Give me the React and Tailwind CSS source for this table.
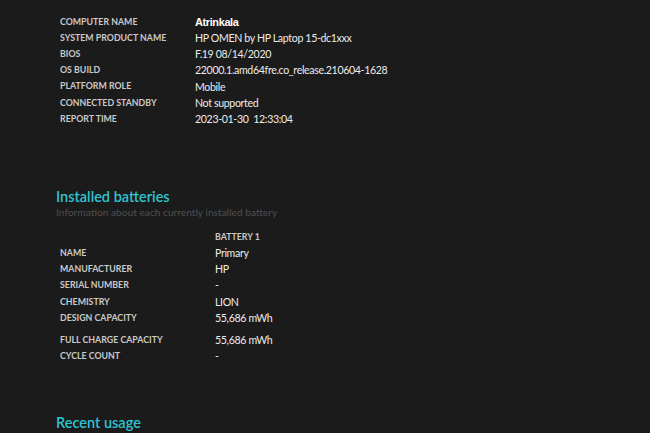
const systemRows = [
  ['COMPUTER NAME', 'Atrinkala'],
  ['SYSTEM PRODUCT NAME', 'HP OMEN by HP Laptop 15-dc1xxx'],
  ['BIOS', 'F.19 08/14/2020'],
  ['OS BUILD', '22000.1.amd64fre.co_release.210604-1628'],
  ['PLATFORM ROLE', 'Mobile'],
  ['CONNECTED STANDBY', 'Not supported'],
  ['REPORT TIME', '2023-01-30  12:33:04'],
];

const batteryRows = [
  ['NAME', 'Primary'],
  ['MANUFACTURER', 'HP'],
  ['SERIAL NUMBER', '-'],
  ['CHEMISTRY', 'LION'],
  ['DESIGN CAPACITY', '55,686 mWh'],
];

const font = { fontFamily: 'Lato, "Open Sans", sans-serif' };

function Label({ children }) {
  return (
    <span className="text-[8.8px] leading-none font-bold text-[#c9c9c9]">{children}</span>
  );
}

function Row({ label, value, valueX = 'w-[135px]', bold }) {
  return (
    <div className="flex items-center h-[16.2px]">
      <div className={`${valueX} shrink-0 flex items-center`}>
        <Label>{label}</Label>
      </div>
      {bold ? (
        <span className="text-[11px] leading-none font-bold text-white tracking-[-0.4px]" style={{ fontFamily: '"Liberation Sans", Arial, sans-serif' }}>
          {value}
        </span>
      ) : (
        <span className="text-[10.6px] leading-none tracking-[-0.35px] text-[#ececec] whitespace-pre">{value}</span>
      )}
    </div>
  );
}

export default function App() {
  return (
    <div className="w-[650px] h-[433px] overflow-hidden bg-[#1b1b1b]" style={font}>
      {/* System info */}
      <div className="pl-[60px] pt-[14px]">
        {systemRows.map(([l, v], i) => (
          <Row key={l} label={l} value={v} bold={i === 0} />
        ))}
      </div>

      {/* Installed batteries */}
      <div className="pl-[56px] mt-[61px]">
        <h2 className="text-[14.5px] leading-[18px] font-semibold text-[#2ec4d0]">Installed batteries</h2>
        <p className="text-[10.2px] leading-[13px] text-[#4f4f4f]">Information about each currently installed battery</p>
      </div>

      <div className="pl-[60px] mt-[12px]">
        <div className="flex items-center h-[13px]">
          <div className="w-[155px] shrink-0" />
          <Label>BATTERY 1</Label>
        </div>
        <div className="mt-[1px]">
          {batteryRows.map(([l, v]) => (
            <Row key={l} label={l} value={v} valueX="w-[155px]" />
          ))}
        </div>
        <div className="mt-[6px]">
          <Row label="FULL CHARGE CAPACITY" value="55,686 mWh" valueX="w-[155px]" />
          <Row label="CYCLE COUNT" value="-" valueX="w-[155px]" />
        </div>
      </div>

      <div className="pl-[56px] mt-[49px]">
        <h2 className="text-[14.5px] leading-[18px] font-semibold text-[#2ec4d0]">Recent usage</h2>
      </div>
    </div>
  );
}
